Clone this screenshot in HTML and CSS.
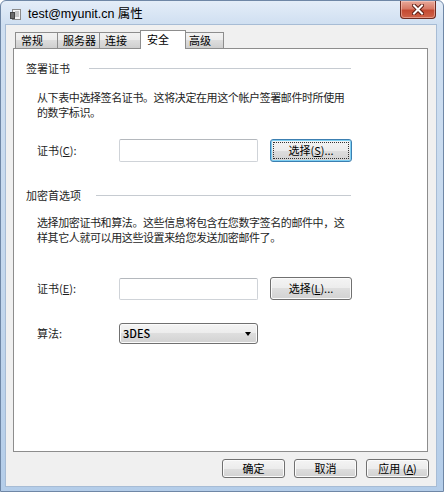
FILE: index.html
```html
<!DOCTYPE html>
<html>

<head>
    <meta charset="utf-8" />
    <title>test@myunit.cn 属性</title>
    <link rel="stylesheet" href="styles.css">
</head>

<body>
    <div class="window">
        <div class="titlebar">
            <span class="app_icon">
                <svg width="12" height="13" viewBox="0 0 12 13">
                    <rect x="2.5" y="1.5" width="8" height="10" fill="#f4f4f4" stroke="#8a8a8a" />
                    <rect x="0.5" y="4.5" width="4" height="6" fill="#6b6b6b" stroke="#444" />
                    <line x1="5" y1="4" x2="9" y2="4" stroke="#9a9a9a" />
                    <line x1="5" y1="6" x2="9" y2="6" stroke="#9a9a9a" />
                    <line x1="5" y1="8" x2="9" y2="8" stroke="#9a9a9a" />
                </svg>
            </span>
            <span class="title">test@myunit.cn 属性</span>
            <span class="close">
                <svg width="12" height="11" viewBox="0 0 12 11">
                    <path d="M2 1.5 L10 9.5 M10 1.5 L2 9.5" stroke="#5a1a10" stroke-width="4" stroke-linecap="square" />
                    <path d="M2 1.5 L10 9.5 M10 1.5 L2 9.5" stroke="#fff" stroke-width="2" stroke-linecap="square" />
                </svg>
            </span>
        </div>
        <div class="client">
            <ul class="tabs">
                <li>常规</li>
                <li>服务器</li>
                <li>连接</li>
                <li class="active">安全</li>
                <li>高级</li>
            </ul>
            <div class="panel">
                <div class="group_title"><span>签署证书</span><i class="rule"></i></div>
                <p class="desc">从下表中选择签名证书。这将决定在用这个帐户签署邮件时所使用<br>的数字标识。</p>
                <div class="row row_first">
                    <label>证书(<u>C</u>):</label>
                    <span class="textbox"></span>
                    <button class="btn pick focused"><span class="focus_rect">选择(<u>S</u>)...</span></button>
                </div>

                <div class="group_title group_second"><span>加密首选项</span><i class="rule"></i></div>
                <p class="desc desc_second">选择加密证书和算法。这些信息将包含在您数字签名的邮件中，这<br>样其它人就可以用这些设置来给您发送加密邮件了。</p>
                <div class="row row_cert">
                    <label>证书(<u>E</u>):</label>
                    <span class="textbox"></span>
                    <button class="btn pick"><span class="focus_rect">选择(<u>L</u>)...</span></button>
                </div>
                <div class="row row_algo">
                    <label>算法:</label>
                    <span class="combo"><span>3DES</span><i class="arrow"></i></span>
                </div>
            </div>
            <div class="footer">
                <button class="btn">确定</button>
                <button class="btn">取消</button>
                <button class="btn">应用 (<u>A</u>)</button>
            </div>
        </div>
    </div>
</body>

</html>
```

FILE: styles.css
```css
/*
    mini reset
*/

* {
    margin: 0;
    padding: 0;
    box-sizing: border-box;
}

ul {
    list-style: none;
}

html,
body {
    width: 444px;
    height: 492px;
    overflow: hidden;
}

body {
    background: #ffffff;
    color: #1a1a1a;
    font-family: "Noto Sans CJK SC", sans-serif;
    font-size: 11px;
    line-height: 15px;
}

u {
    text-decoration: underline;
    text-underline-offset: 1px;
}

/*
    1. window frame
*/

.window {
    width: 444px;
    height: 492px;
    display: flex;
    flex-direction: column;
    border: 1px solid #6f87a6;
    border-radius: 6px 6px 0 0;
    background: linear-gradient(to bottom, #e4edf8 0, #cfdff1 24px, #c3d7ed 60%, #b4cde9 100%);
}

.titlebar {
    height: 24px;
    flex: none;
    display: flex;
    align-items: flex-start;
    padding: 0 7px 0 9px;
}

.app_icon {
    margin-top: 7px;
    width: 12px;
    height: 13px;
    display: flex;
}

.title {
    margin: 5px 0 0 6px;
    font-family: "Liberation Sans", "Noto Sans CJK SC", sans-serif;
    font-size: 12.5px;
    line-height: 16px;
    color: #000;
}

.close {
    margin-left: auto;
    width: 36px;
    height: 18px;
    display: flex;
    align-items: center;
    justify-content: center;
    border: 1px solid #6d2a1f;
    border-top: none;
    border-radius: 0 0 4px 4px;
    background: linear-gradient(to bottom, #e9a99a 0%, #d77a66 45%, #c44a32 55%, #d0644a 100%);
    box-shadow: inset 0 0 0 1px rgba(255, 220, 210, 0.45);
}

/*
    2. client area
*/

.client {
    flex: 1;
    margin: 0 7px 5px 5px;
    padding: 5px 8px 0 7px;
    background: #f0f0f0;
    box-shadow: 0 0 0 1px #a7bcd5;
    display: flex;
    flex-direction: column;
}

.tabs {
    height: 18px;
    display: flex;
    align-items: flex-end;
    margin-left: 2px;
    position: relative;
    z-index: 2;
}

.tabs > li {
    height: 16px;
    margin-right: -1px;
    padding-left: 5px;
    line-height: 14px;
    color: #000;
    border: 1px solid #8d8d8d;
    border-bottom: none;
    background: linear-gradient(to bottom, #f2f2f2 0%, #ebebeb 50%, #dddddd 50%, #cfcfcf 100%);
}

.tabs > li:nth-child(1) { width: 43px; }
.tabs > li:nth-child(2) { width: 43px; }
.tabs > li:nth-child(3) { width: 42px; }
.tabs > li:nth-child(4) { width: 46px; }
.tabs > li:nth-child(5) { width: 39px; padding-left: 3px; }

.tabs > li.active {
    height: 19px;
    margin-bottom: -1px;
    padding-left: 6px;
    line-height: 17px;
    background: #ffffff;
    border-color: #8d8d8d;
}

.panel {
    height: 404px;
    flex: none;
    background: #ffffff;
    border: 1px solid #8d8d8d;
    padding: 12px 0 0 12px;
}

/*
    3. groups
*/

.group_title {
    width: 325px;
    display: flex;
    align-items: center;
    gap: 19px;
    color: #1e1e1e;
}

.group_title .rule {
    flex: 1;
    height: 1px;
    background: #c6cbd1;
}

.group_second {
    margin-top: 26px;
    gap: 15px;
}

.desc {
    margin: 14px 0 0 11px;
    color: #1e1e1e;
    letter-spacing: -0.4px;
}

.desc_second {
    margin-top: 12px;
}

.row {
    display: flex;
    align-items: center;
    height: 23px;
    margin-left: 11px;
}

.row_first { margin-top: 19px; }
.row_cert { margin-top: 32px; }
.row_algo { margin-top: 23px; height: 21px; }

.row label {
    width: 82px;
    color: #1e1e1e;
}

.textbox {
    width: 139px;
    height: 22px;
    border: 1px solid #cfd3d8;
    border-top-color: #b4b8bd;
    border-radius: 2px;
    background: #fff;
}

.row_first .textbox {
    height: 23px;
}

/*
    4. buttons & combo
*/

.btn {
    height: 19px;
    width: 63px;
    display: flex;
    align-items: center;
    justify-content: center;
    font-family: "Noto Sans CJK SC", sans-serif;
    font-size: 11px;
    line-height: 15px;
    color: #000;
    border: 1px solid #707070;
    border-radius: 3px;
    background: linear-gradient(to bottom, #f4f4f4 0%, #ececec 50%, #dedede 50%, #d2d2d2 100%);
    box-shadow: inset 0 0 0 1px #fbfbfb;
}

.pick {
    width: 82px;
    height: 23px;
    margin-left: 12px;
    padding: 2px;
}

.focus_rect {
    flex: 1;
    align-self: stretch;
    display: flex;
    align-items: center;
    justify-content: center;
    border: 1px dotted transparent;
}

.focused {
    border-color: #3c7fb1;
    box-shadow: inset 0 0 0 1px #7fd0f3;
}

.focused .focus_rect {
    border-color: #333;
}

.combo {
    width: 139px;
    height: 21px;
    display: flex;
    align-items: center;
    padding: 0 6px 0 3px;
    border: 1px solid #707070;
    border-radius: 3px;
    background: linear-gradient(to bottom, #f4f4f4 0%, #ececec 50%, #dedede 50%, #d2d2d2 100%);
    box-shadow: inset 0 0 0 1px #fbfbfb;
    color: #000;
    font-weight: 500;
}

.combo .arrow {
    margin-left: auto;
    width: 0;
    height: 0;
    border-left: 3.5px solid transparent;
    border-right: 3.5px solid transparent;
    border-top: 4px solid #000;
}

.footer {
    display: flex;
    justify-content: flex-end;
    gap: 9px;
    margin: 7px -1px 0 0;
}
```
